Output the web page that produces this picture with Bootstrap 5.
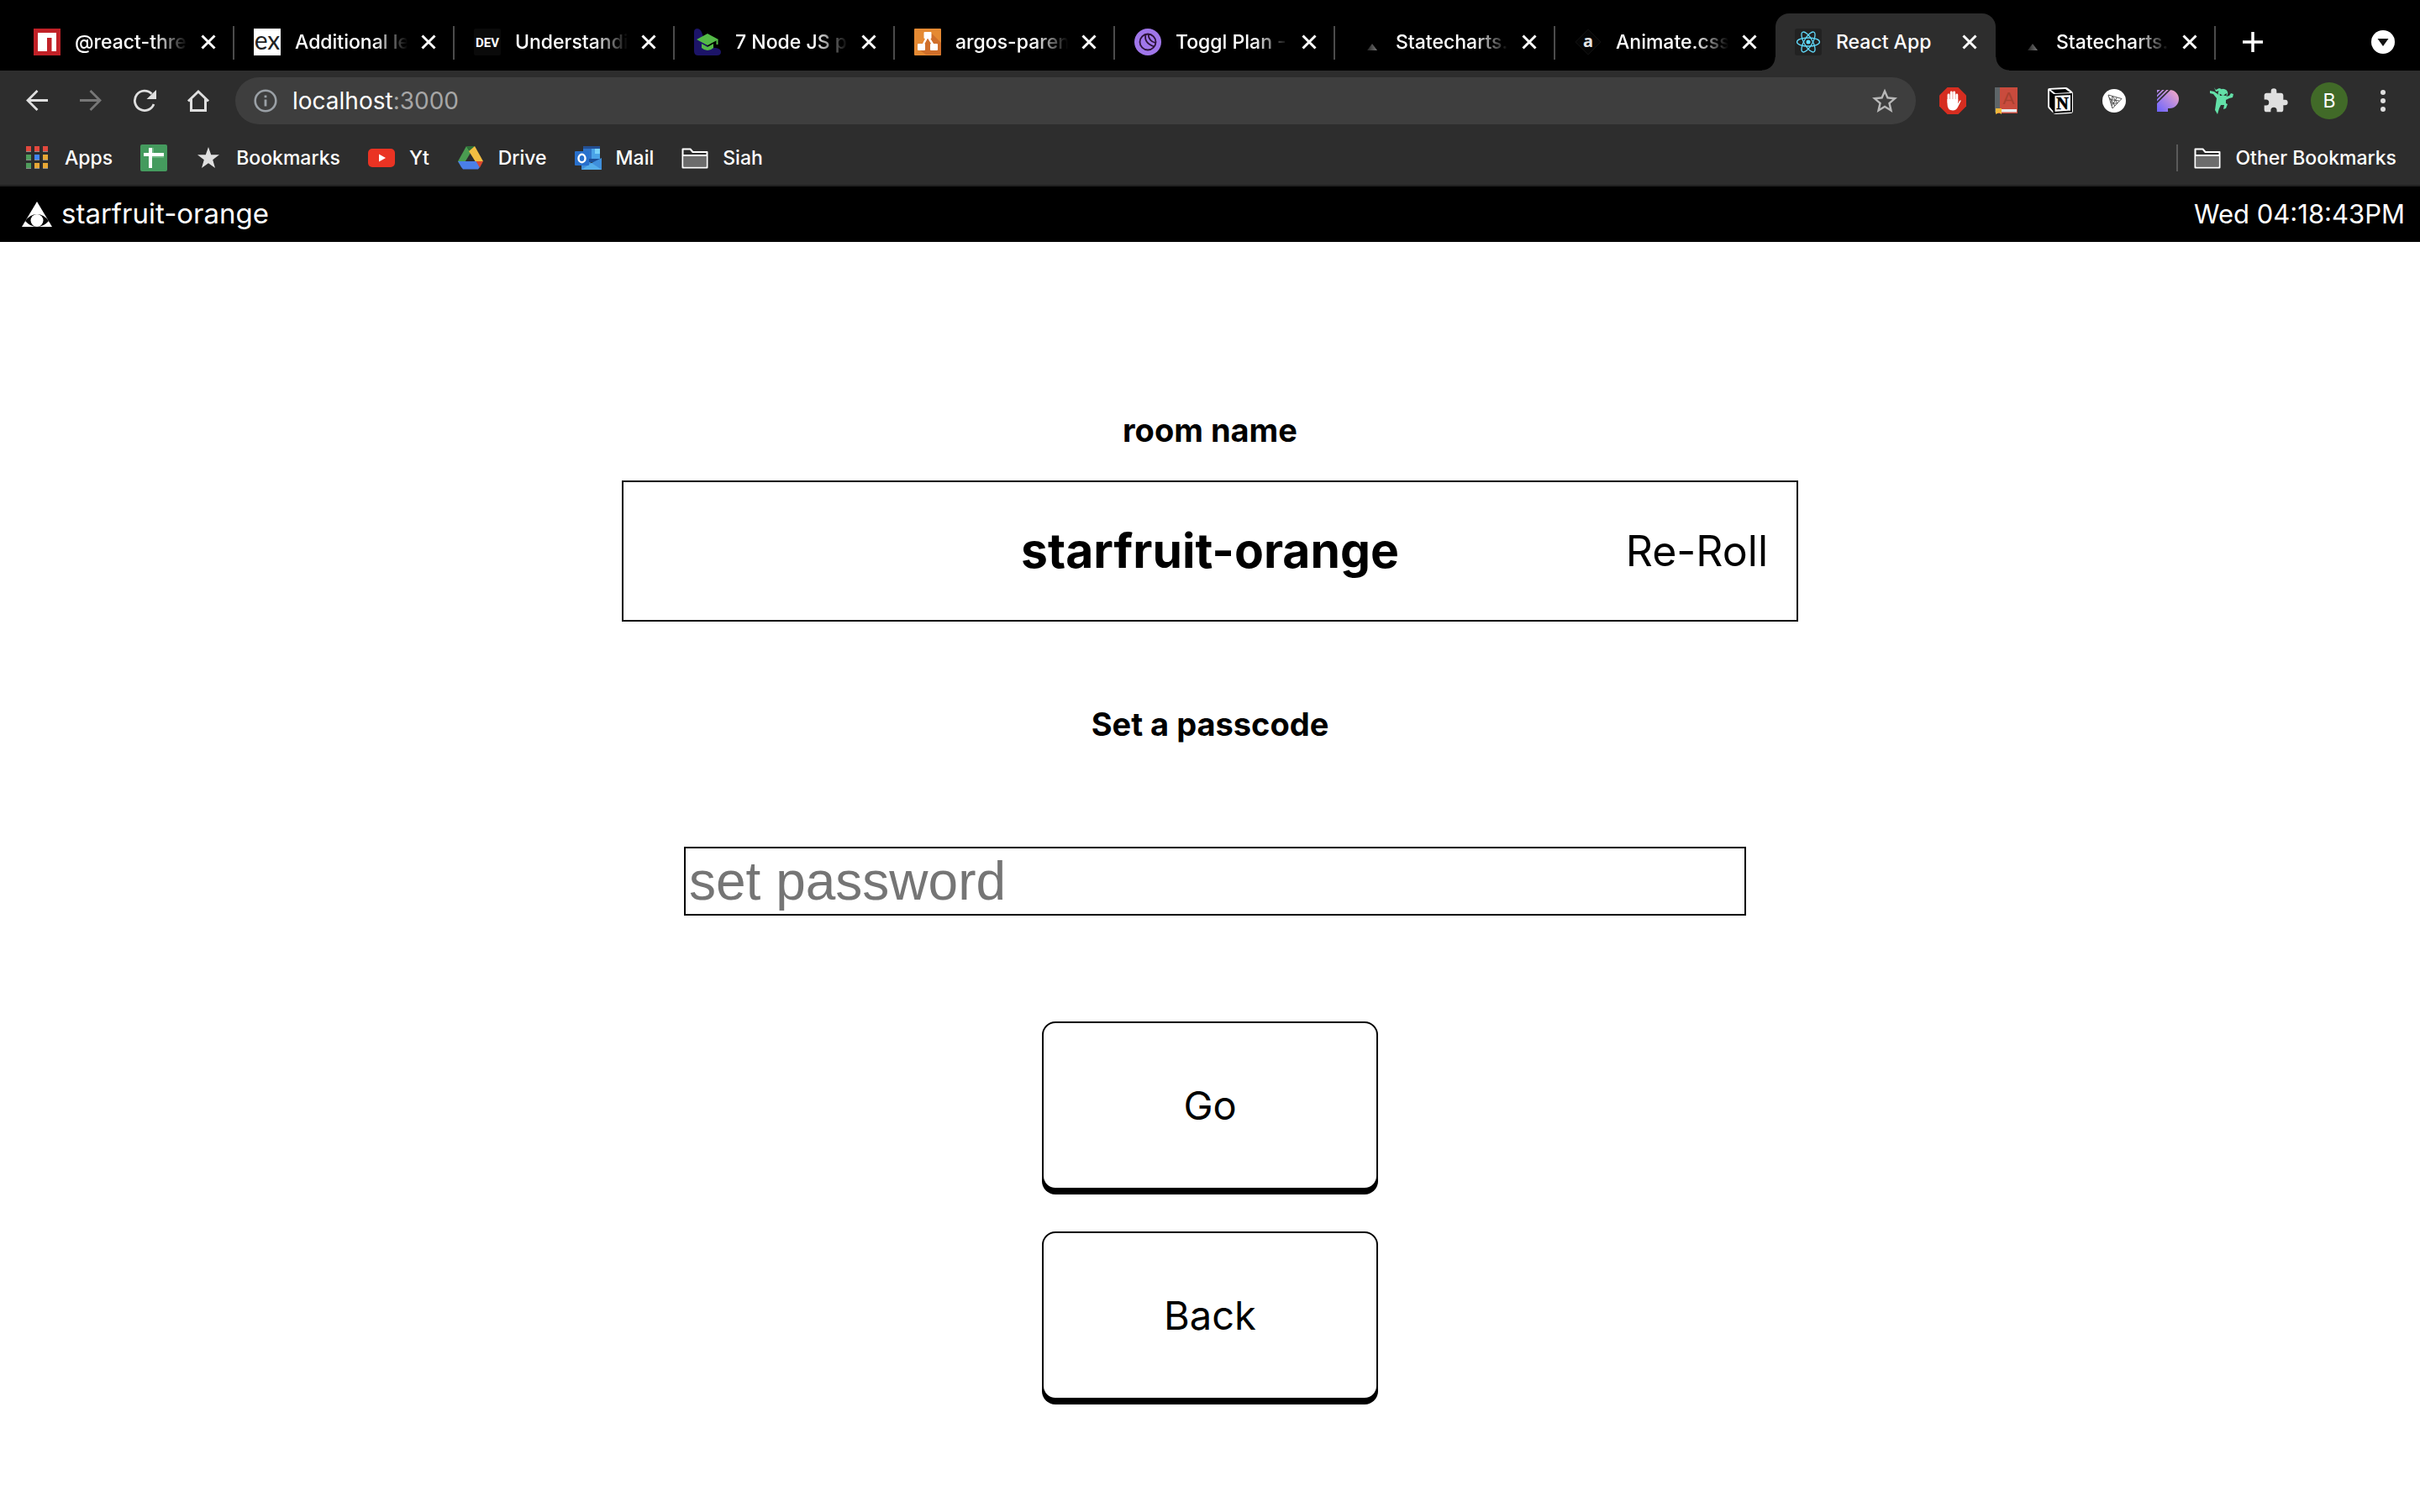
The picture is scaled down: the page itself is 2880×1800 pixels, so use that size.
<!DOCTYPE html>
<html lang="en">
<head>
<meta charset="utf-8">
<meta name="viewport" content="width=device-width, initial-scale=1">
<title>React App</title>
<link href="https://cdn.jsdelivr.net/npm/bootstrap@5.3.0/dist/css/bootstrap.min.css" rel="stylesheet">
<style>
  body { font-family: Inter, "Liberation Sans", sans-serif; background: #fff; color: #000; }
  svg { display: block; flex: none; }
  button.plain { background: none; border: 0; padding: 0; color: inherit; }

  /* tab strip */
  .tab-strip { background: #000; color: #fff; height: 84px; padding: 16px 30px 0 17px; font-size: 23px; font-weight: 500; line-height: 32px; }
  .tab-list { min-width: 0; }
  .tab-cell { position: relative; flex: 0 1 262px; min-width: 0; height: 68px; padding: 0 19px 0 23px; }
  .tab-cell::after { content: ""; position: absolute; right: 0; top: 15px; width: 2px; height: 40px; background: #4b4b4b; }
  .tab-cell.before-current::after, .tab-cell.current::after { display: none; }
  .tab-cell.current { background: #2d2d2d; border-radius: 16px 16px 0 0; }
  .tab-flare { position: absolute; bottom: 0; width: 16px; height: 16px; }
  .tab-flare.start { left: -16px; background: radial-gradient(circle at 0 0, transparent 15px, #2d2d2d 16px); }
  .tab-flare.end { right: -16px; background: radial-gradient(circle at 100% 0, transparent 15px, #2d2d2d 16px); }
  .tab-link { color: #fff; gap: 17px; min-width: 0; flex: 0 1 183px; }
  .tab-title { flex: 1 1 0; min-width: 0; overflow: hidden; white-space: nowrap; }
  .tab-title.fade-out { -webkit-mask-image: linear-gradient(90deg, #000 70%, transparent); mask-image: linear-gradient(90deg, #000 70%, transparent); }

  /* toolbar */
  .tool-row { background: #2d2d2d; height: 72px; padding: 0 12px; color: #dfdfdf; }
  .tool-btn { width: 64px; height: 56px; display: flex; align-items: center; justify-content: center; }
  .address-box { background: #3e3e3e; height: 56px; margin: 0 12px; padding: 0 22px; border-radius: 28px; gap: 18px; font-size: 28px; color: #fff; }
  .address-box .port { color: #a6a6a6; }
  .avatar-disc { width: 44px; height: 44px; border-radius: 50%; background: #416a28; color: #fff; font-size: 23px; line-height: 44px; text-align: center; }

  /* bookmarks */
  .mark-row { background: #2d2d2d; height: 66px; padding: 0 28px; border-bottom: 2px solid #212121; font-size: 23px; font-weight: 500; gap: 33px; }
  .mark-link { color: #fff; gap: 17px; display: flex; align-items: center; }
  .mark-rule { width: 2px; height: 32px; background: #5a5a5a; margin-right: -14px; }

  /* page */
  .room-bar { background: #000; color: #fff; height: 66px; padding: 0 18px 0 26px; font-size: 31px; }
  .room-bar .brand { gap: 11px; font-size: 33px; }
  .setup { padding: 200px 24px 128px; }
  .setup h2, .setup label { font-size: 38px; line-height: 48px; font-weight: 700; margin: 0; }
  .name-box { width: 100%; max-width: 1400px; height: 168px; border: 2px solid #000; margin: 36px 0 98px; padding: 0 34px; display: grid; grid-template-columns: 1fr auto 1fr; align-items: center; }
  .name-box h1 { grid-column: 2; font-size: 57px; font-weight: 700; margin: 0; }
  .name-box button { font-size: 50px; justify-self: end; }
  .pass-field { width: calc(100% - 12px); max-width: 1264px; height: 82px; margin: 122px 0 126px 12px; padding: 2px 4px; border: 2px solid #000; border-radius: 0; font: 64px "Liberation Sans", Arial, sans-serif; color: #000; background: #fff; }
  .pass-field::placeholder { color: #757575; opacity: 1; }
  .key-btn { width: 400px; height: 200px; border: 2px solid #000; border-radius: 16px; background: #fff; color: #000; box-shadow: 0 6px 0 #000; font-size: 47px; }
  .key-stack { gap: 50px; }
</style>
</head>
<body>

<svg width="0" height="0" class="position-absolute" aria-hidden="true">
  <symbol id="x" viewBox="0 0 24 24"><path d="M4.500 4.500L19.500 19.500M19.500 4.500L4.500 19.500" stroke="#fff" stroke-width="3" fill="none"/></symbol>
  <symbol id="chart" viewBox="0 0 32 32"><defs><linearGradient id="cg"><stop offset="0" stop-color="#222"/><stop offset="1" stop-color="#777"/></linearGradient></defs><path d="M15 26L21 18L27 26Z" fill="url(#cg)"/></symbol>
  <symbol id="folder" viewBox="0 0 32 32"><path d="M1.500 5.500h9l3 3.500h17v18.500h-29z" fill="#2d2d2d" stroke="#fff" stroke-width="2" stroke-linejoin="round"/><path d="M2.500 14h27v12.500h-27z" fill="#6c6c6c"/><path d="M2 13h28" stroke="#fff" stroke-width="2"/></symbol>
</svg>

<header>
  <div class="tab-strip d-flex">
    <nav class="tab-list d-flex flex-grow-1" aria-label="Tabs">
      <div class="tab-cell d-flex align-items-center justify-content-between">
        <a href="#" class="tab-link d-flex align-items-center text-decoration-none"><svg width="32" height="32" viewBox="0 0 32 32"><path fill="#c12127" d="M0 0h32v32H0z"/><path fill="#fff" d="M5 5h22v22h-5.500V11H16v16H5z"/></svg><span class="tab-title fade-out">@react-three</span></a>
        <button class="plain" aria-label="Close tab"><svg width="24" height="24"><use href="#x"/></svg></button>
      </div>
      <div class="tab-cell d-flex align-items-center justify-content-between">
        <a href="#" class="tab-link d-flex align-items-center text-decoration-none"><svg width="32" height="32" viewBox="0 0 32 32"><path fill="#fff" d="M0 0h32v32H0z"/><text x="16" y="25" font-size="30" font-family="Lato" font-weight="400" fill="#222" text-anchor="middle">ex</text></svg><span class="tab-title fade-out">Additional learning</span></a>
        <button class="plain" aria-label="Close tab"><svg width="24" height="24"><use href="#x"/></svg></button>
      </div>
      <div class="tab-cell d-flex align-items-center justify-content-between">
        <a href="#" class="tab-link d-flex align-items-center text-decoration-none"><svg width="32" height="32" viewBox="0 0 32 32"><rect width="32" height="32" rx="2" fill="#0a0a0a"/><text x="16" y="22" font-size="15" font-family="Roboto" font-weight="700" fill="#fff" text-anchor="middle">DEV</text></svg><span class="tab-title fade-out">Understanding</span></a>
        <button class="plain" aria-label="Close tab"><svg width="24" height="24"><use href="#x"/></svg></button>
      </div>
      <div class="tab-cell d-flex align-items-center justify-content-between">
        <a href="#" class="tab-link d-flex align-items-center text-decoration-none"><svg width="32" height="32" viewBox="0 0 32 32"><path fill="#1c1468" d="M0 4Q0 0 4 0Q8 0 10 7L14 19Q17 23 26 23Q32 24 32 28Q32 32 27 32H5Q0 32 0 27z"/><path fill="#54b948" d="M16 6L29 13L16 20L3 13z"/><path fill="#54b948" d="M9 18L16 22L23 18V23Q20 26 16 26Q12 26 9 23z"/><path d="M27.500 13v6" stroke="#54b948" stroke-width="2"/></svg><span class="tab-title fade-out">7 Node JS projects</span></a>
        <button class="plain" aria-label="Close tab"><svg width="24" height="24"><use href="#x"/></svg></button>
      </div>
      <div class="tab-cell d-flex align-items-center justify-content-between">
        <a href="#" class="tab-link d-flex align-items-center text-decoration-none"><svg width="32" height="32" viewBox="0 0 32 32"><rect width="32" height="32" rx="1" fill="#e58a33"/><path fill="#d06f2b" d="M20 5L32 17V31H14L4 24z"/><path d="M16 9L9 22M16 9L24 22" stroke="#fff" stroke-width="2.500"/><g fill="#fff"><rect x="11.500" y="4" width="9" height="8" rx="1"/><rect x="4" y="18" width="9" height="8" rx="1"/><rect x="19" y="18" width="9" height="8" rx="1"/></g></svg><span class="tab-title fade-out">argos-parent</span></a>
        <button class="plain" aria-label="Close tab"><svg width="24" height="24"><use href="#x"/></svg></button>
      </div>
      <div class="tab-cell d-flex align-items-center justify-content-between">
        <a href="#" class="tab-link d-flex align-items-center text-decoration-none"><svg width="32" height="32" viewBox="0 0 32 32"><circle cx="16" cy="16" r="16" fill="#a076ea"/><g fill="none" stroke="#2c1338" stroke-width="1.800"><circle cx="16" cy="16" r="9.500"/><path d="M13.500 7Q11 17 23.500 21.500M16.500 6.500Q17 15 25 17"/></g></svg><span class="tab-title fade-out">Toggl Plan - Team</span></a>
        <button class="plain" aria-label="Close tab"><svg width="24" height="24"><use href="#x"/></svg></button>
      </div>
      <div class="tab-cell d-flex align-items-center justify-content-between">
        <a href="#" class="tab-link d-flex align-items-center text-decoration-none"><svg width="32" height="32"><use href="#chart"/></svg><span class="tab-title fade-out">Statecharts.dev</span></a>
        <button class="plain" aria-label="Close tab"><svg width="24" height="24"><use href="#x"/></svg></button>
      </div>
      <div class="tab-cell before-current d-flex align-items-center justify-content-between">
        <a href="#" class="tab-link d-flex align-items-center text-decoration-none"><svg width="32" height="32" viewBox="0 0 32 32"><path d="M16 1L31 16L16 31L1 16z" fill="#050505" stroke="#111"/><text x="16" y="22" font-size="20" font-weight="700" font-family="Noto Sans" fill="#e4e4e4" text-anchor="middle">a</text></svg><span class="tab-title fade-out">Animate.css | A</span></a>
        <button class="plain" aria-label="Close tab"><svg width="24" height="24"><use href="#x"/></svg></button>
      </div>
      <div class="tab-cell current d-flex align-items-center justify-content-between">
        <span class="tab-flare start"></span><span class="tab-flare end"></span>
        <a href="#" class="tab-link d-flex align-items-center text-decoration-none" aria-current="page"><svg width="32" height="32" viewBox="0 0 32 32"><rect width="32" height="32" rx="3" fill="#222"/><g fill="none" stroke="#61dafb" stroke-width="1.300"><ellipse cx="16" cy="16" rx="13.500" ry="5"/><ellipse cx="16" cy="16" rx="13.500" ry="5" transform="rotate(60 16 16)"/><ellipse cx="16" cy="16" rx="13.500" ry="5" transform="rotate(120 16 16)"/></g><circle cx="16" cy="16" r="2.500" fill="#61dafb"/></svg><span class="tab-title">React App</span></a>
        <button class="plain" aria-label="Close tab"><svg width="24" height="24"><use href="#x"/></svg></button>
      </div>
      <div class="tab-cell d-flex align-items-center justify-content-between">
        <a href="#" class="tab-link d-flex align-items-center text-decoration-none"><svg width="32" height="32"><use href="#chart"/></svg><span class="tab-title fade-out">Statecharts.dev</span></a>
        <button class="plain" aria-label="Close tab"><svg width="24" height="24"><use href="#x"/></svg></button>
      </div>
      <button class="plain ps-4 ms-1" aria-label="New tab"><svg class="ms-1" width="24" height="68" viewBox="0 0 24 68"><path d="M12 22v24M0 34h24" stroke="#fff" stroke-width="3.500"/></svg></button>
    </nav>
    <button class="plain" aria-label="Search tabs"><svg width="28" height="68" viewBox="0 0 28 68"><circle cx="14" cy="34" r="14" fill="#fff"/><path d="M7.500 30h13L14 39z" fill="#111"/></svg></button>
  </div>

  <div class="tool-row d-flex align-items-center">
    <button class="plain tool-btn" aria-label="Back"><svg width="28" height="28" viewBox="0 0 28 28" fill="none" stroke="#dfdfdf" stroke-width="2.800"><path d="M27 13.500H3M14.500 2L3 13.500L14.500 25"/></svg></button>
    <button class="plain tool-btn" aria-label="Forward"><svg width="28" height="28" viewBox="0 0 28 28" fill="none" stroke="#777" stroke-width="2.800"><path d="M1 13.500H25M13.500 2L25 13.500L13.500 25"/></svg></button>
    <button class="plain tool-btn" aria-label="Reload"><svg width="28" height="28" viewBox="0 0 28 28"><path d="M25 18A11.700 11.700 0 1 1 22.500 5.700" fill="none" stroke="#dfdfdf" stroke-width="2.800"/><path d="M28 1V12H16.500z" fill="#dfdfdf"/></svg></button>
    <button class="plain tool-btn" aria-label="Home"><svg width="28" height="28" viewBox="0 0 28 28" fill="none" stroke="#dfdfdf" stroke-width="3"><path d="M2 14.500L14 3L26 14.500M5.500 12V25.500H22.500V12"/></svg></button>
    <div class="address-box d-flex align-items-center flex-grow-1">
      <svg width="28" height="28" viewBox="0 0 28 28"><circle cx="14" cy="14" r="12.300" fill="none" stroke="#9aa0a6" stroke-width="2.600"/><path fill="#9aa0a6" d="M12.600 7.500h2.800v2.800h-2.800zM12.600 12.500h2.800v8h-2.800z"/></svg>
      <span class="flex-grow-1">localhost<span class="port">:3000</span></span>
      <button class="plain" aria-label="Bookmark this page"><svg width="30" height="30" viewBox="0 0 24 24"><path fill="#b8b8b8" d="M22 9.240l-7.190-.620L12 2 9.190 8.630 2 9.240l5.460 4.730L5.820 21 12 17.270 18.180 21l-1.630-7.030L22 9.240zM12 15.400l-3.760 2.270 1-4.280-3.320-2.880 4.380-.380L12 6.100l1.710 4.040 4.380.380-3.320 2.880 1 4.280L12 15.400z" transform="translate(-2.400 -2.100) scale(1.200)"/></svg></button>
    </div>
    <button class="plain tool-btn" aria-label="Ad blocker"><svg width="32" height="32" viewBox="0 0 32 32"><path fill="#d62d20" d="M9.500 0h13L32 9.500v13L22.500 32h-13L0 22.500v-13z"/><g stroke="#fff" stroke-width="2.900" stroke-linecap="round"><path d="M11 18V9M14.300 16V6M17.600 16V6M20.800 17V9"/></g><path fill="#fff" d="M9.500 14h12.700v5.500L24 16q2-1.500 1.500.5L22 23.500Q20 27.500 16 27.500Q9.500 27.500 9.500 20z"/></svg></button>
    <button class="plain tool-btn" aria-label="Dictionary"><svg width="28" height="32" viewBox="0 0 28 32"><path fill="#c94b3d" d="M1 0h26v31H1z"/><path fill="#5e6568" d="M0 0h6v30H0z"/><text x="16.500" y="20" font-size="21" fill="#a8402f" text-anchor="middle" font-family="Liberation Sans">A</text><path fill="#e9edf0" d="M5 26h21v3.500H5z"/><path fill="#f0b93a" d="M1 25h7v7l-3-2-4 2z"/></svg></button>
    <button class="plain tool-btn" aria-label="Notion"><svg width="32" height="32" viewBox="0 0 32 32"><path fill="#fff" d="M1 3Q1 1 3 1L22 0Q24 0 25 1L30 5Q31 6 31 8V28Q31 31 28 31L11 32Q8 32 7 30L2 25Q1 24 1 22z"/><path fill="#000" d="M3 4L8 8V29L3 23zM4.500 2.800L22 2L27.500 6L10 7z"/><path fill="#fff" stroke="#000" stroke-width="2" d="M8.500 9L29 8V28.500L8.500 30z"/><text x="18.500" y="26" font-size="20" font-family="Liberation Serif" font-weight="700" stroke="#000" stroke-width=".6" text-anchor="middle">N</text></svg></button>
    <button class="plain tool-btn" aria-label="Triangle extension"><svg width="28" height="28" viewBox="0 0 28 28"><circle cx="14" cy="14" r="14" fill="#fff"/><g fill="none" stroke="#555" stroke-width="1"><path d="M7 7L23 11.500L12 23z"/><path d="M12 8.500L10.500 17L18 17M17.500 10L11 20M9 12.500L20 14M8.500 10L15 20M12 8.500L18 17"/></g></svg></button>
    <button class="plain tool-btn" aria-label="P extension"><svg width="28" height="28" viewBox="0 0 28 28"><defs><linearGradient id="pg" x1="0" y1="1" x2="1" y2="0"><stop offset="0" stop-color="#6a62ff"/><stop offset=".55" stop-color="#b78be0"/><stop offset="1" stop-color="#ffaec0"/></linearGradient></defs><path fill="url(#pg)" d="M1 1H16A11 11 0 0 1 16 23H14V27H1z"/><path d="M0 7L7 0M0 12L12 0M0 17L17 0" stroke="#2d2d2d" stroke-width="1.700"/></svg></button>
    <button class="plain tool-btn" aria-label="Ninja extension"><svg width="30" height="32" viewBox="0 0 30 32"><g fill="#63e0a8"><ellipse cx="16.500" cy="7" rx="5.800" ry="5.200"/><path d="M1 4L6 5L13 10L20 11L24 10L26 7L29 8L28 12L24 13L20 15L20 19L22 20L20 25L17 26L18 21L14 21L12 25L10 32L7 27L8 20L9 13L5 8L1 7zM6 0L8 3L12 1L15 2L13 4L8 5z"/></g><path d="M12.500 7.500L16 9.500L13 10zM21 7L17 9.500L20.500 10z" fill="#222"/></svg></button>
    <button class="plain tool-btn" aria-label="Extensions"><svg width="32" height="32" viewBox="0 0 24 24"><path fill="#dfdfdf" d="M20.500 11H19V7c0-1.100-.9-2-2-2h-4V3.500a2.500 2.500 0 0 0-5 0V5H4c-1.100 0-2 .9-2 2v3.800h1.500a2.700 2.700 0 0 1 0 5.400H2V20c0 1.100.9 2 2 2h3.800v-1.500a2.700 2.700 0 0 1 5.400 0V22H17c1.100 0 2-.9 2-2v-4h1.500a2.500 2.500 0 0 0 0-5z"/></svg></button>
    <button class="plain tool-btn" aria-label="Profile"><span class="avatar-disc">B</span></button>
    <button class="plain tool-btn" aria-label="Menu"><svg width="6" height="26" viewBox="0 0 6 26" fill="#dfdfdf"><circle cx="3" cy="3" r="3"/><circle cx="3" cy="13" r="3"/><circle cx="3" cy="23" r="3"/></svg></button>
  </div>

  <nav class="mark-row d-flex align-items-center" aria-label="Bookmarks">
    <a href="#" class="mark-link text-decoration-none"><svg width="32" height="32" viewBox="0 0 32 32"><g fill="#e2483d"><path d="M3 2h6v6H3zM13 2h6v6h-6zM23 2h6v6h-6z"/></g><path fill="#4f9d5c" d="M3 12h6v6H3zM3 22h6v6H3z"/><path fill="#4285f4" d="M13 12h6v6h-6z"/><path fill="#e8a735" d="M23 12h6v6h-6zM13 22h6v6h-6zM23 22h6v6h-6z"/><path fill="#8d8d8d" d="M3 8h6v1H3zM13 8h6v1h-6zM23 8h6v1h-6zM3 18h6v1H3zM13 18h6v1h-6zM23 18h6v1h-6zM3 28h6v1H3zM13 28h6v1h-6zM23 28h6v1h-6z"/></svg>Apps</a>
    <a href="#" class="mark-link" aria-label="Sheets"><svg width="32" height="32" viewBox="0 0 32 32"><rect width="32" height="32" rx="2" fill="#459b5e"/><path fill="#6bb681" d="M14 4h2v10h12v2h-14z"/><path fill="#fff" d="M10 4h4v24h-4zM4 10h24v4H4z"/></svg></a>
    <a href="#" class="mark-link text-decoration-none"><svg width="32" height="32" viewBox="0 0 32 32"><path fill="#dfdfdf" d="M16 3L19.200 12.300H29L21.200 18.200L24 28L16 22.200L8 28L10.800 18.200L3 12.300H12.800z"/></svg>Bookmarks</a>
    <a href="#" class="mark-link text-decoration-none"><svg width="32" height="32" viewBox="0 0 32 32"><rect y="5" width="32" height="22" rx="5" fill="#ea3323"/><path fill="#fff" d="M13 11.500L21 16L13 20.500z"/></svg>Yt</a>
    <a href="#" class="mark-link text-decoration-none"><svg width="32" height="32" viewBox="0 0 32 32"><path fill="#4a9c50" d="M11 2L1 20L5.500 27L16 10z"/><path fill="#2e7038" d="M11 2H21L16 10z"/><path fill="#f3be42" d="M21 2L31 20H21.500L14 8z"/><path fill="#4a7fe8" d="M1 20H23.500L27 27L25 29.500H7L5 27z"/><path fill="#d9492f" d="M22.500 20H31L27 27.500z"/><path fill="#2d2d2d" d="M16 12.500L20.500 20H11.500z"/></svg>Drive</a>
    <a href="#" class="mark-link text-decoration-none"><svg width="32" height="32" viewBox="0 0 32 32"><path fill="#234f93" d="M10 2h20v7H10z"/><path fill="#2f74c9" d="M10 5h10v14H10z"/><path fill="#4aa3e8" d="M20 5h10v14H20z"/><path fill="#78d2fa" d="M24 5h6v6h-6z"/><path fill="#1d4f98" d="M16 17h14v4H16z"/><path fill="#3f8fdc" d="M8 17L20 22L32 16V30H8z"/><path fill="#55aeea" d="M8 30L20 22L32 30z"/><rect y="8" width="17" height="17" rx="1" fill="#2870cc"/><ellipse cx="8.500" cy="16.500" rx="4" ry="4.700" fill="none" stroke="#fff" stroke-width="2.400"/></svg>Mail</a>
    <a href="#" class="mark-link text-decoration-none"><svg width="32" height="32"><use href="#folder"/></svg>Siah</a>
    <span class="mark-rule ms-auto"></span>
    <a href="#" class="mark-link text-decoration-none"><svg width="32" height="32"><use href="#folder"/></svg>Other Bookmarks</a>
  </nav>
</header>

<div class="room-bar d-flex align-items-center justify-content-between">
  <div class="brand d-flex align-items-center">
    <svg width="36" height="30" viewBox="0 0 36 30"><path fill="#fff" d="M18 0L36 30H0z"/><path fill="#000" d="M4 23Q10 15 18 15Q26 15 32 23Q26 30 18 30Q10 30 4 23z"/><circle cx="18" cy="22.500" r="7.500" fill="#fff"/></svg>
    <span>starfruit-orange</span>
  </div>
  <time>Wed 04:18:43PM</time>
</div>

<main class="setup d-flex flex-column align-items-center">
  <h2>room name</h2>
  <div class="name-box">
    <h1>starfruit-orange</h1>
    <button class="plain" type="button">Re-Roll</button>
  </div>
  <label for="passcode">Set a passcode</label>
  <input id="passcode" class="pass-field" type="text" placeholder="set password">
  <div class="key-stack d-flex flex-column">
    <button type="button" class="key-btn">Go</button>
    <button type="button" class="key-btn">Back</button>
  </div>
</main>

<script src="https://cdn.jsdelivr.net/npm/bootstrap@5.3.0/dist/js/bootstrap.bundle.min.js"></script>
</body>
</html>
